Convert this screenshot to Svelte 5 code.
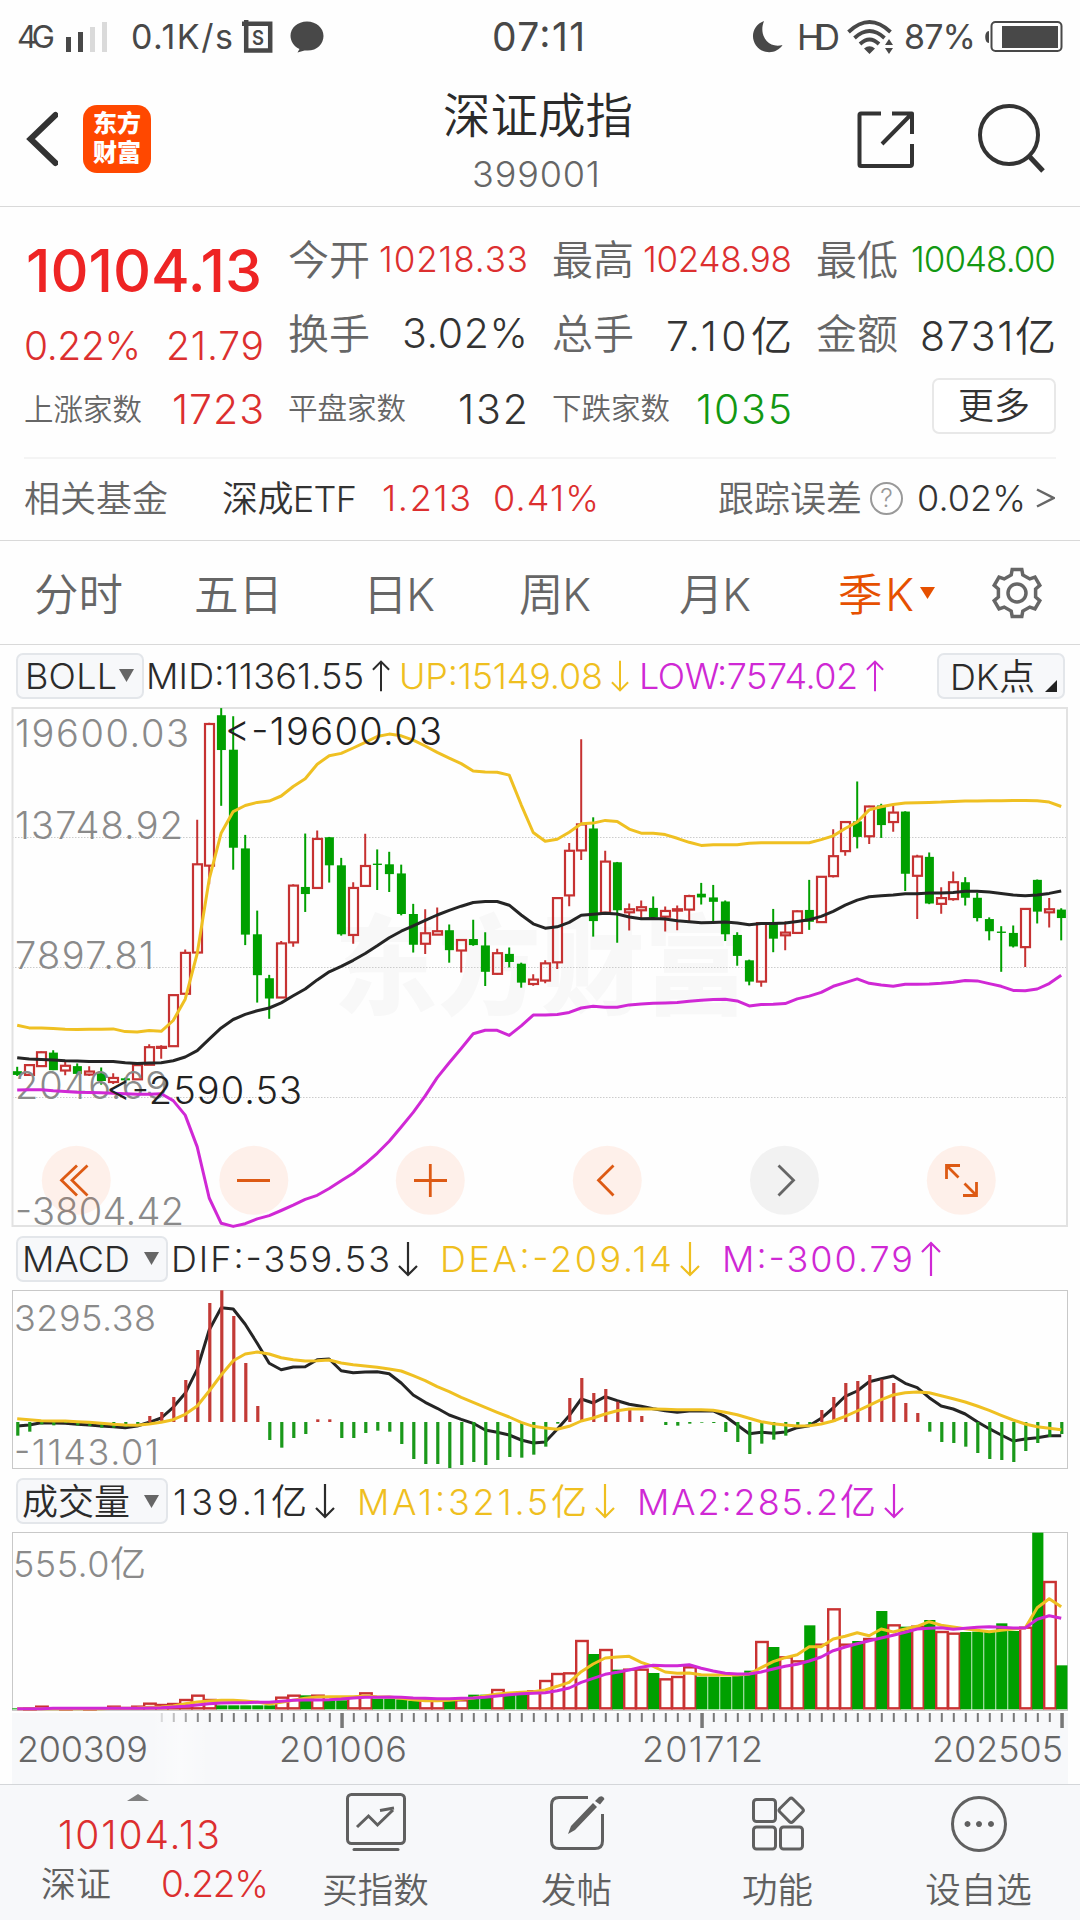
<script>
  // Every pane shares one time axis: 88 quarters, 12px apart.
  const STEP = 12;
  const xAt = (i) => 17.2 + i * STEP;

  // Each candle: direction, then high, body top, body bottom and low.
  const candles = `g 1085 1098 1109 1112;r 1078 1080 1109 1110;r 1040 1042 1083 1084;g 1036 1043 1095 1095;r 1070 1082 1096 1110;g 1075 1083 1106 1108;r 1083 1099 1108 1112;g 1087 1104 1127 1138;r 1104 1118 1130 1136;g 1117 1119 1125 1132;r 1078 1080 1122 1123;r 1018 1027 1079 1080;r 1021 1026 1029 1061;r 871 873 1024 1025;r 738 748 869 870;r 354 486 747 748;r 67 71 490 545;g 24 45 148 313;g 48 147 437 502;g 399 439 694 725;g 623 693 814 895;g 813 823 883 943;r 713 720 880 881;r 545 549 717 730;g 395 553 574 627;r 386 411 556 557;g 405 406 489 540;g 467 489 693 697;r 539 556 695 721;r 396 491 550 551;g 442 484 488 562;g 449 486 515 568;g 487 513 633 637;g 603 633 724 747;r 619 690 721 751;r 614 684 694 695;g 664 681 740 777;r 708 710 741 806;g 650 707 725 727;g 687 726 804 846;r 736 749 810 813;g 732 751 775 791;g 777 780 836 851;r 811 827 840 845;r 770 779 830 838;r 584 586 776 796;r 423 446 578 610;r 116 368 445 473;g 347 380 654 700;r 446 478 629 630;g 479 480 622 718;r 602 619 628 682;r 593 613 622 645;g 581 615 643 645;r 611 624 641 685;r 608 619 623 681;r 576 580 620 655;g 541 573 584 605;g 547 584 597 655;g 593 596 693 713;g 687 695 757 786;g 768 770 833 844;r 659 660 833 848;g 618 657 706 746;r 655 688 696 740;r 622 625 689 692;g 532 621 656 680;r 521 523 657 659;r 382 462 521 525;r 358 361 447 461;g 241 359 405 439;r 313 315 403 426;g 307 312 370 408;r 309 333 361 390;g 329 330 514 565;r 458 463 520 648;g 451 464 602 604;r 554 586 603 632;r 507 539 589 594;g 524 539 585 608;g 570 585 645 655;g 643 648 684 711;g 669 685 689 804;g 667 689 729 732;r 616 618 731 790;g 531 532 626 661;r 586 619 628 673;g 616 620 645 711`
    .split(';')
    .map((row, i) => {
      const [dir, ...v] = row.trim().split(' ');
      const [high, top, bottom, low] = v.map((n) => Number(n) / 2.958);
      return { up: dir === 'r', x: xAt(i), high, top, bottom, low };
    });

  const line = (values, scale, offset = 0) =>
    values.map((v, i) => `${xAt(i).toFixed(1)},${(v / scale - offset).toFixed(1)}`).join(' ');

  const upper = line([962,970,970,972,974,975,974,974,973,981,982,978,980,948,885,750,530,393,330,312,303,299,284,256,233,190,165,158,142,125,108,101,106,119,136,155,172,188,210,213,214,222,310,392,418,412,391,366,364,356,359,382,394,394,398,409,421,430,428,428,428,424,422,422,422,422,422,413,402,380,361,325,316,309,305,304,303,302,300,299,299,298,298,297,297,298,302,315], 2.958);
  const middle = line([1058,1062,1063,1065,1067,1068,1069,1069,1069,1073,1075,1074,1073,1067,1056,1037,1003,970,945,930,919,911,896,875,855,828,804,788,770,750,727,703,684,668,652,636,622,610,599,596,596,607,636,662,675,671,658,637,634,631,633,642,647,646,648,653,656,659,658,657,660,665,661,661,660,655,650,640,625,607,592,582,579,577,573,573,571,571,569,566,566,568,572,577,579,577,572,565], 2.958);
  const lower = line([1154,1153,1153,1156,1158,1160,1161,1162,1163,1165,1166,1166,1165,1185,1228,1322,1473,1548,1557,1549,1535,1525,1510,1494,1477,1465,1445,1422,1400,1372,1341,1305,1263,1220,1171,1117,1073,1031,987,977,977,992,964,932,932,930,924,911,906,909,909,902,899,897,896,895,891,888,886,885,890,905,901,900,898,884,876,865,847,836,825,838,843,847,841,841,840,838,835,830,831,839,847,859,860,855,839,814], 2.958);

  const MACD_TOP = 60;
  const ZERO = 591 / 3 - MACD_TOP;
  const macdBars = [632,620,598,601,594,601,603,608,608,606,598,573,561,516,465,375,234,196,273,414,543,645,668,639,627,583,583,639,639,624,617,620,657,702,717,717,729,720,711,720,705,696,698,689,665,596,519,459,504,492,530,554,573,591,600,602,596,593,594,621,651,687,656,644,632,602,598,555,516,474,468,450,463,474,534,564,620,651,654,665,684,702,705,711,678,654,636,627]
    .map((v, i) => {
      const end = v / 3 - MACD_TOP;
      return { x: xAt(i) + 0.7, up: end < ZERO, y: Math.min(end, ZERO), h: Math.abs(end - ZERO) };
    });
  const dif = line([603,600,593,594,595,598,600,603,605,608,603,592,579,547,505,433,315,248,252,298,355,415,434,426,425,404,402,437,443,441,440,446,474,510,532,550,570,583,595,615,622,630,645,654,651,613,572,522,534,515,527,538,544,551,557,562,558,558,558,574,600,626,622,625,621,608,602,580,549,514,498,470,461,453,475,488,518,543,552,567,590,611,630,648,642,638,632,632], 3, MACD_TOP);
  const dea = line([581,584,587,588,588,590,592,595,598,600,601,597,592,584,568,543,498,450,407,387,381,387,398,404,408,407,405,414,419,423,427,432,438,452,467,485,500,517,532,547,562,576,592,604,609,613,604,588,579,567,557,552,552,552,553,554,554,554,556,562,569,580,590,596,600,603,602,597,588,574,558,541,524,510,503,501,503,512,521,531,543,556,571,585,597,605,610,614], 3, MACD_TOP);

  const VOL_TOP = 10;
  const BASE = 568 / 3 - VOL_TOP;
  const volumes = [565,565,560,564,565,565,565,565,560,564,560,551,555,552,540,527,540,556,556,556,556,556,533,527,526,527,541,541,532,520,536,536,538,542,541,541,541,541,524,524,510,516,514,514,483,462,460,363,402,390,449,449,449,459,478,471,442,470,470,471,464,452,366,381,412,424,316,374,268,374,363,357,273,316,320,320,300,336,341,336,335,336,310,333,323,38,186,436]
    .map((v, i) => ({ x: xAt(i), up: candles[i].up, y: v / 3 - VOL_TOP }));
  const ma1 = line([566,566,566,566,566,566,566,566,565,565,564,562,561,558,551,546,543,541,541,543,546,552,547,541,535,531,530,530,530,528,530,531,535,539,542,542,541,538,534,528,522,519,517,515,510,499,487,455,432,414,411,409,427,439,456,460,459,464,465,465,465,462,443,425,413,404,380,380,357,349,338,347,327,336,327,319,305,316,321,326,331,335,331,327,324,263,236,260], 3, VOL_TOP);
  const ma2 = line([566,566,566,565,565,565,565,565,565,565,565,564,563,561,559,555,551,549,548,548,547,547,544,541,540,540,539,537,534,532,532,531,532,534,535,536,536,535,534,532,528,524,521,520,518,512,504,487,475,463,457,450,442,436,437,437,434,445,453,460,462,462,456,447,439,433,423,411,392,381,371,362,354,346,337,327,325,323,328,325,322,320,322,324,324,298,287,295], 3, VOL_TOP);

  const ticks = Array.from({ length: 76 }, (_, k) => k + 12).map((i) => ({
    x: xAt(i) + 0.6,
    major: i % 30 === 27,
    o: i < 16 ? 0.25 + (i - 12) * 0.2 : 1
  }));

  // Spreads a label's letters over the width its class gives it.
  function fit(node) {
    const range = document.createRange();
    range.selectNodeContents(node);
    const natural = range.getBoundingClientRect().width;
    const gaps = node.textContent.length - 1;
    node.style.letterSpacing = `${(node.clientWidth - natural) / gaps}px`;
  }

  const gear = (() => {
    const pts = [];
    for (let k = 0; k < 6; k++) {
      const a = (k * Math.PI) / 3 - Math.PI / 2;
      for (const [d, r] of [[-0.31, 19], [-0.2, 24], [0.2, 24], [0.31, 19]]) {
        pts.push(`${(28 + r * Math.cos(a + d)).toFixed(1)},${(28 + r * Math.sin(a + d)).toFixed(1)}`);
      }
    }
    return pts.join(' ');
  })();
</script>

{#snippet arrow(down)}
  <svg class="arrow" width="20" height="36" viewBox="0 0 20 36">
    <path d={down ? 'M10 1V34M1 25L10 34L19 25' : 'M10 35V2M1 11L10 2L19 11'} />
  </svg>
{/snippet}

{#snippet caret()}
  <svg class="caret" width="15" height="13" viewBox="0 0 15 13"><path d="M0 0H15L7.5 13Z" /></svg>
{/snippet}

<div class="screen">
  <div class="status">
    <span class="net" use:fit>4G</span>
    <svg class="bars" width="42" height="32" viewBox="0 0 42 32">
      <path class="ink" d="M0 16h5v15h-5zM12 11h5v20h-5z" />
      <path class="off" d="M24 6h5v25h-5zM36 1h5v30h-5z" />
    </svg>
    <span class="speed" use:fit>0.1K/s</span>
    <svg class="sbox" width="31" height="34" viewBox="0 0 31 34">
      <path d="M0 3.8H28.200V30.500H4.200V0" class="frame" />
      <text x="10" y="24.500" textLength="12" lengthAdjust="spacingAndGlyphs">S</text>
    </svg>
    <svg class="bubble" width="34" height="32" viewBox="0 0 34 32">
      <path class="ink" d="M17 0.500C7.500 .5 .5 7 .5 14.800C.5 20.500 4 25.500 9.500 28L7.500 31.500L14.500 29.400C26 31 33.500 23.500 33.500 15C33.500 7 26.500 .5 17 .5Z" />
    </svg>
    <span class="clock" use:fit>07:11</span>
    <svg class="moon" width="32" height="34" viewBox="0 0 32 34">
      <path class="ink" d="M12 1C1 5 -2 17 4 25.500C11 35 25 34 30.500 25C17 29 6 16 12 1Z" />
    </svg>
    <span class="hd" use:fit>HD</span>
    <svg class="wifi" width="46" height="34" viewBox="0 0 46 34">
      <path d="M1.500 12Q22.500 -8 43.500 12M7.500 18Q22.500 4 37.500 18M13 24Q22.500 15 32 24" />
      <path class="ink" d="M17 28.500Q22.500 24 28 28.500L22.500 34ZM38 25L42 19L46 25ZM38 28L42 34L46 28Z" />
    </svg>
    <span class="pct" use:fit>87%</span>
    <svg class="battery" width="78" height="31" viewBox="0 0 78 31">
      <path class="ink" d="M4 10C-1 10 -1 22 4 22ZM17 5H73V27H17Z" />
      <rect x="6.500" y="1" width="70" height="29" rx="4" />
    </svg>
  </div>

  <header>
    <svg class="back" width="34" height="56" viewBox="0 0 34 56"><path d="M31.500 4L6.500 28L31.500 52" /></svg>
    <div class="logo"><span>东方</span><span>财富</span></div>
    <div class="title">
      <h1>深证成指</h1>
      <span class="code" use:fit>399001</span>
    </div>
    <svg class="share" width="60" height="60" viewBox="0 0 60 60">
      <path d="M25 3.500H5Q3.500 3.500 3.500 5V54.500Q3.500 56 5 56H54Q56 56 56 54V34M36 3.500H56V24M56 3.500L26 34" />
    </svg>
    <svg class="search" width="70" height="72" viewBox="0 0 70 72">
      <circle cx="32" cy="31" r="29" /><path d="M52 52L66 67" />
    </svg>
  </header>

  <section class="quote">
    <div class="last">
      <strong class="price red" use:fit>10104.13</strong>
      <div class="change red"><span class="w114" use:fit>0.22%</span><span class="w98" use:fit>21.79</span></div>
      <div class="count"><small>上涨家数</small><b class="w91 red" use:fit>1723</b></div>
    </div>
    <div class="cell"><label>今开</label><b class="sm w148 red" use:fit>10218.33</b></div>
    <div class="cell"><label>最高</label><b class="sm w148 red" use:fit>10248.98</b></div>
    <div class="cell"><label>最低</label><b class="sm w144 green" use:fit>10048.00</b></div>
    <div class="cell"><label>换手</label><b class="w124" use:fit>3.02%</b></div>
    <div class="cell"><label>总手</label><b class="w124" use:fit>7.10亿</b></div>
    <div class="cell"><label>金额</label><b class="w136" use:fit>8731亿</b></div>
    <div class="cell low"><small>平盘家数</small><b class="w70" use:fit>132</b></div>
    <div class="cell low"><small>下跌家数</small><b class="w96 green" use:fit>1035</b></div>
    <div class="cell low end"><button class="more">更多</button></div>
  </section>

  <section class="fund">
    <span class="grey cjk">相关基金</span>
    <span class="etf cjk" use:fit>深成ETF</span>
    <span class="nav-v red" use:fit>1.213</span>
    <span class="nav-p red" use:fit>0.41%</span>
    <span class="grey track cjk">跟踪误差</span>
    <span class="help">?</span>
    <span class="err" use:fit>0.02%</span>
    <svg class="gt" width="19" height="20" viewBox="0 0 19 20"><path d="M1 1.500L17.500 10L1 18.500" /></svg>
  </section>

  <nav class="tabs">
    <span>分时</span><span>五日</span><span use:fit class="k">日K</span><span use:fit class="k">周K</span><span use:fit class="k">月K</span>
    <span use:fit class="k active">季K</span>
    <svg class="tri" width="15" height="12" viewBox="0 0 15 12"><path d="M0 0H15L7.500 12Z" /></svg>
    <svg class="gear" width="56" height="56" viewBox="0 0 56 56"><polygon points={gear} /><circle cx="28" cy="28" r="9" /></svg>
  </nav>

  <div class="info boll">
    <button class="pick"><span class="w90" use:fit>BOLL</span>{@render caret()}</button>
    <span class="v mid" use:fit>MID:11361.55</span>{@render arrow(false)}
    <span class="v up yellow" use:fit>UP:15149.08</span><i class="yellow">{@render arrow(true)}</i>
    <span class="v lo magenta" use:fit>LOW:7574.02</span><i class="magenta">{@render arrow(false)}</i>
    <button class="pick dk"><span class="w85" use:fit>DK点</span><svg width="12" height="12" viewBox="0 0 12 12"><path d="M12 0V12H0Z" /></svg></button>
  </div>

  <svg class="pane" width="1080" height="530" viewBox="0 0 1080 530">
    <text class="mark" x="334" y="306" textLength="414" lengthAdjust="spacingAndGlyphs">东方财富</text>
    <path class="grid" d="M12 137.500H1067M12 267.500H1067M12 397.500H1067" />
    <rect class="border" x="12.500" y="8" width="1054.500" height="518" />
    {#each candles as c}
      <g class={c.up ? 'rise' : 'fall'}>
        {#if c.up}
          <path d="M{c.x} {c.high}V{c.top}M{c.x} {c.bottom}V{c.low}" />
          <rect x={c.x - 4.2} y={c.top} width="9" height={c.bottom - c.top} />
        {:else}
          <path d="M{c.x} {c.high}V{c.low}" />
          <rect x={c.x - 4.3} y={c.top} width="9" height={c.bottom - c.top} />
        {/if}
      </g>
    {/each}
    <g class="scale">
      <text x="15" y="47.300" textLength="174">19600.03</text>
      <text x="15" y="139" textLength="168">13748.92</text>
      <text x="15" y="269" textLength="139">7897.81</text>
      <text x="15" y="398.500" textLength="153">2046.69</text>
      <text x="15" y="524.700" textLength="169">-3804.42</text>
    </g>
    <polyline class="yellow" points={upper} />
    <polyline class="ink" points={middle} />
    <polyline class="magenta" points={lower} />
    <g class="peak">
      <text x="225" y="45.300" textLength="217">&lt;-19600.03</text>
      <text x="106" y="404.300" textLength="196">&lt;-2590.53</text>
    </g>
    <g class="ctl">
      <circle cx="76.300" cy="480.300" r="34.500" /><circle cx="253.800" cy="480.300" r="34.500" />
      <circle cx="430.300" cy="480.300" r="34.500" /><circle cx="607.300" cy="480.300" r="34.500" />
      <circle class="off" cx="784.500" cy="480.300" r="34.500" /><circle cx="961.300" cy="480.300" r="34.500" />
      <path d="M77 465.500L61.500 480.300L77 495.500M87.500 465.500L72 480.300L87.500 495.500M237 480.500H270M414 480.500H447M430.300 464V497M613.500 465.500L598.500 480.300L613.500 495.500" />
      <path class="off" d="M778.500 465.500L793.500 480.300L778.500 495.500" />
      <path d="M946.500 479V465.500H960M946.500 465.500L958.500 477.500M976.500 482V495.500H963M976.500 495.500L964.500 483.500" />
    </g>
  </svg>

  <div class="info macd">
    <button class="pick"><span class="w106" use:fit>MACD</span>{@render caret()}</button>
    <span class="v a" use:fit>DIF:-359.53</span>{@render arrow(true)}
    <span class="v b yellow" use:fit>DEA:-209.14</span><i class="yellow">{@render arrow(true)}</i>
    <span class="v c magenta" use:fit>M:-300.79</span><i class="magenta">{@render arrow(false)}</i>
  </div>

  <svg class="pane" width="1080" height="187" viewBox="0 0 1080 187">
    <rect class="border thin" x="12.500" y="5.500" width="1055" height="178" />
    <g class="scale small">
      <text x="14" y="45.700" textLength="142">3295.38</text>
      <text x="14" y="180" textLength="145">-1143.01</text>
    </g>
    <polyline class="ink" points={dif} />
    {#each macdBars as b}
      <rect class={b.up ? 'hist up' : 'hist'} x={b.x - 1.7} y={b.y} width="3.200" height={b.h} />
    {/each}
    <polyline class="yellow" points={dea} />
  </svg>

  <div class="info vol">
    <button class="pick"><span class="w106 cjk" use:fit>成交量</span>{@render caret()}</button>
    <span class="v a cjk" use:fit>139.1亿</span>{@render arrow(true)}
    <span class="v b cjk yellow" use:fit>MA1:321.5亿</span><i class="yellow">{@render arrow(true)}</i>
    <span class="v c cjk magenta" use:fit>MA2:285.2亿</span><i class="magenta">{@render arrow(true)}</i>
  </div>

  <svg class="pane" width="1080" height="254" viewBox="0 0 1080 254">
    <defs>
      <linearGradient id="fade">
        <stop offset="0" stop-color="#fff" stop-opacity="0" />
        <stop offset=".5" stop-color="#fff" stop-opacity=".4" />
        <stop offset="1" stop-color="#fff" stop-opacity="0" />
      </linearGradient>
    </defs>
    <rect class="border thin" x="12.500" y="2.500" width="1055" height="178" />
    <g class="scale small"><text x="13" y="46.700" textLength="133">555.0亿</text></g>
    {#each volumes as b}
      {#if b.up}
        <rect class="vup" x={b.x - 5} y={b.y} width="11.500" height={Math.max(BASE - 1 - b.y, 1)} />
      {:else}
        <rect class="vdown" x={b.x - 5} y={b.y} width="11.200" height={Math.max(BASE - b.y, 1)} />
      {/if}
    {/each}
    <polyline class="yellow" points={ma1} />
    <polyline class="magenta" points={ma2} />
    <rect class="axis" x="12" y="183" width="1056" height="71" />
    <rect fill="url(#fade)" x="150" y="183" width="60" height="71" />
    {#each ticks as t}
      <rect class="tick" opacity={t.o} x={t.x - (t.major ? 1.5 : 1)} y="183" width={t.major ? 3.5 : 2} height={t.major ? 15 : 9} />
    {/each}
    <g class="dates">
      <text x="17" y="232.300" textLength="131">200309</text>
      <text x="279" y="232.300" textLength="128">201006</text>
      <text x="642" y="232.300" textLength="121">201712</text>
      <text x="932" y="232.300" textLength="131">202505</text>
    </g>
  </svg>

  <footer>
    <div class="idx">
      <svg width="22" height="7" viewBox="0 0 22 7"><path d="M11 0L22 7H0Z" /></svg>
      <span class="ip red" use:fit>10104.13</span>
      <div class="il"><span>深证</span><span class="ic red" use:fit>0.22%</span></div>
    </div>
    <div class="item">
      <svg width="60" height="60" viewBox="0 0 60 60">
        <rect x="1.500" y="2.500" width="57" height="49" rx="4" />
        <path d="M8 57.500H52" class="cap" /><path d="M11 35L22.500 24L31.500 33L47 18M34 18.500L48 16" />
      </svg>
      <span>买指数</span>
    </div>
    <div class="item">
      <svg width="60" height="60" viewBox="0 0 60 60">
        <path d="M41 5.500H12Q4.500 5.500 4.500 13V49Q4.500 56.500 12 56.500H48Q55.500 56.500 55.500 49V22" />
        <path class="solid" d="M21 42L24 34L46 11L50 15L28 38ZM48 9L52 5Q56 3 57.500 7L53 12.500Z" />
      </svg>
      <span>发帖</span>
    </div>
    <div class="item">
      <svg width="60" height="60" viewBox="0 0 60 60">
        <rect x="5.500" y="7.500" width="22" height="22" rx="3" /><rect x="5.500" y="35" width="22" height="22" rx="3" />
        <rect x="32.500" y="35" width="22" height="22" rx="3" /><rect x="34" y="9" width="18.500" height="18.500" rx="2.500" transform="rotate(45 43.200 18.200)" />
      </svg>
      <span>功能</span>
    </div>
    <div class="item">
      <svg width="60" height="60" viewBox="0 0 60 60">
        <circle cx="30" cy="32" r="26.500" /><path class="solid" d="M18.500 29a3 3 0 1 0 .01 0ZM30 29a3 3 0 1 0 .01 0ZM42 29a3 3 0 1 0 .01 0Z" />
      </svg>
      <span>设自选</span>
    </div>
  </footer>
</div>

<style>
  :global(body) { background: #fff; }
  .screen {
    width: 1080px; height: 1920px; overflow: hidden; display: flex; flex-direction: column;
    background: #fefefe; color: #2b2b2b; font-family: Inter, "Noto Sans CJK SC", sans-serif; font-weight: 350;
    font-optical-sizing: none; font-feature-settings: "case";
  }
  .screen > * { flex: none; box-sizing: border-box; }
  span, b, strong, label, small, h1 { white-space: nowrap; font-weight: inherit; margin: 0; display: block; }
  svg { display: block; flex: none; }
  i { display: block; }
  button { font: inherit; color: inherit; margin: 0; padding: 0; box-sizing: border-box; }
  .red { color: #dc2f2f; }
  .green { color: #129812; }
  .yellow { color: #efbf1f; }
  .magenta { color: #cf28d4; }

  .status { height: 73px; display: flex; align-items: center; color: #484848; font-size: 34px; font-weight: 400; padding-left: 17px; }
  .status .ink { fill: #484848; }
  .net { width: 38px; font-size: 31px; }
  .bars { margin-left: 11px; }
  .bars .off { fill: #dadada; }
  .speed { width: 102px; margin-left: 23px; }
  .sbox { margin-left: 9px; }
  .frame { fill: none; stroke: #484848; stroke-width: 4.500; }
  .sbox text { font-size: 20px; font-weight: 600; fill: #484848; }
  .bubble { margin-left: 17px; }
  .clock { width: 93px; font-size: 39px; margin-left: 168px; }
  .moon { margin-left: 167px; }
  .hd { width: 43px; margin-left: 13px; font-size: 35px; }
  .wifi { margin-left: 7px; }
  .wifi path:first-child { fill: none; stroke: #484848; stroke-width: 3.800; }
  .pct { width: 72px; margin-left: 11px; }
  .battery { margin-left: 9px; }
  .battery rect { fill: none; stroke: #484848; stroke-width: 2; }

  header { height: 134px; border-bottom: 1px solid #d9d9d9; display: flex; align-items: flex-start; padding: 0 0 0 24px; }
  header svg { fill: none; stroke: #333; stroke-width: 4; }
  .back { margin-top: 38px; }
  .back path { stroke-width: 6; stroke-linecap: round; }
  .logo { width: 68px; height: 68px; margin: 32px 0 0 25px; border-radius: 14px; background: #ff4800; color: #fff; font-size: 24px; font-weight: 800; line-height: 29px; text-align: center; padding-top: 4px; box-sizing: border-box; }
  .title { width: 240px; margin: 14px 0 0 267px; display: flex; flex-direction: column; align-items: center; }
  h1 { font-size: 47.500px; line-height: 58px; }
  .code { width: 128px; font-size: 36px; line-height: 44px; margin: 7px 4px 0 0; color: #666; }
  .share { margin: 37px 0 0 198px; stroke-linejoin: round; }
  .search { margin: 31px 0 0 61px; }
  .search path { stroke-width: 5; }

  .quote {
    height: 250px; margin-right: -24px; padding: 21px 24px 0; display: grid; grid-template-columns: 240px 240px 240px 240px; column-gap: 24px;
    grid-template-rows: 74px 76px 74px; color: #333;
  }
  .last { grid-row: 1 / 4; display: flex; flex-direction: column; }
  .price { width: 236px; font-size: 59px; font-weight: 500; line-height: 72px; margin: 7px 0 0 2px; color: #ee2424; }
  .change { display: flex; justify-content: space-between; width: 240px; font-size: 39px; line-height: 48px; margin-top: 15px; }
  .count { display: flex; justify-content: space-between; align-items: center; width: 240px; margin-top: 14px; height: 50px; font-size: 41px; }
  small { font-size: 29.500px; color: #666; }
  .count small { padding-bottom: 5px; }
  .cell { display: flex; justify-content: space-between; align-items: center; font-size: 41px; height: 62px; }
  .cell label { color: #666; padding-bottom: 5px; }
  .cell .sm { font-size: 35px; }
  .cell.end { justify-content: flex-end; }
  .cell.low { height: 56px; }
  .cell.low b { padding-top: 5px; }
  .w70 { width: 70px; } .w85 { width: 85px; } .w90 { width: 92px; } .w91 { width: 92px; } .w96 { width: 96px; } .w98 { width: 98px; }
  .w106 { width: 108px; } .w114 { width: 117px; } .w124 { width: 126px; } .w136 { width: 136px; } .w144 { width: 145px; } .w148 { width: 149px; }
  .more { width: 124px; height: 56px; border: 2px solid #e8e8e8; border-radius: 7px; background: #fff; font-size: 36px; line-height: 50px; }

  .fund { height: 84px; margin: 0; display: flex; align-items: center; padding: 0 24px; font-size: 36px; color: #333; border-bottom: 1px solid #d9d9d9; background: linear-gradient(#f4f4f4, #f4f4f4) 24px 0 / 1032px 2px no-repeat; }
  .fund > * { margin-bottom: 1px; }
  .fund .cjk { padding-bottom: 4px; }
  .grey { color: #666; }
  .etf { width: 135px; margin-left: 54px; }
  .nav-v { width: 89px; margin-left: 25px; }
  .nav-p { width: 106px; margin-left: 22px; }
  .track { margin-left: 119px; }
  .help { width: 33px; height: 33px; border: 2.500px solid #999; border-radius: 50%; box-sizing: border-box; font-size: 25px; line-height: 29px; text-align: center; color: #999; margin-left: 8px; }
  .err { width: 109px; margin-left: 14px; }
  .gt { margin-left: 10px; fill: none; stroke: #666; stroke-width: 2.500; }

  .tabs { height: 104px; border-bottom: 1px solid #d9d9d9; display: flex; align-items: center; padding-left: 34px; font-size: 44.500px; color: #666; }
  .tabs span { padding-bottom: 2px; }
  .tabs span + span { margin-left: 71px; }
  .tabs .k { width: 72px; }
  .tabs span:nth-child(3) { margin-left: 80px; }
  .tabs span:nth-child(4) { margin-left: 84px; }
  .tabs span:nth-child(5) { margin-left: 88px; }
  .tabs .active { color: #e65000; width: 76px; margin-left: 87px !important; }
  .tri { fill: #e65000; margin-left: 6px; }
  .gear { margin-left: 54px; fill: none; stroke: #666; stroke-width: 3.500; }

  .info { display: flex; align-items: center; font-size: 36px; padding-left: 16px; }
  .boll { height: 56px; padding-top: 7px; margin-top: -1px; }
  .macd { height: 55px; padding-top: 2px; }
  .vol { height: 58px; }
  .vol .cjk { padding-bottom: 4px; }
  .pick { height: 46px; border: 2px solid #e3e6ea; border-radius: 7px; background: #f7f8fa; display: flex; align-items: center; }
  .boll .pick { width: 128px; padding-left: 7px; }
  .macd .pick, .vol .pick { width: 152px; padding-left: 4px; }
  .caret { fill: #666; margin-left: 2px; }
  .macd .caret, .vol .caret { margin-left: 14px; }
  .arrow { fill: none; stroke: currentColor; stroke-width: 2.200; }
  .boll .arrow { width: 18px; margin-left: 8px; }
  .macd .arrow, .vol .arrow { margin-left: 8px; }
  .boll .mid { width: 218px; margin-left: 2px; }
  .boll .up { width: 204px; margin-left: 9px; }
  .boll .lo { width: 219px; margin-left: 10px; }
  .info .pick.dk { width: 128px; margin-left: 53px; padding-left: 11px; }
  .dk span { padding-bottom: 3px; }
  .dk svg { margin: 20px 0 0 10px; fill: #222; }
  .macd .a { width: 219px; margin-left: 3px; }
  .macd .b { width: 232px; margin-left: 22px; }
  .macd .c { width: 191px; margin-left: 22px; }
  .vol .a { width: 134px; margin-left: 5px; }
  .vol .b { width: 230px; margin-left: 22px; }
  .vol .c { width: 239px; margin-left: 22px; }

  .pane polyline { fill: none; stroke-width: 3; stroke-linejoin: round; }
  polyline.yellow { stroke: #efc022; }
  polyline.magenta { stroke: #d028d5; }
  polyline.ink { stroke: #252525; }
  .border { fill: none; stroke: #e2e2e2; stroke-width: 2; }
  .border.thin { stroke: #c8c8c8; stroke-width: 1; }
  .grid { fill: none; stroke: #ccc; stroke-width: 1; stroke-dasharray: 1.500 1.500; }
  .mark { font-size: 108px; font-weight: 900; fill: #f8f8f8; }
  .rise { fill: none; stroke: #c63232; stroke-width: 2; }
  .rise rect { stroke-width: 2.200; }
  .fall path { stroke: #00a000; stroke-width: 2; }
  .fall rect { fill: #00a000; }
  .scale { font-size: 38px; fill: #8a8a8a; }
  .scale.small { font-size: 36px; }
  .peak { font-size: 38px; fill: #222; }
  .ctl circle { fill: rgba(255, 100, 30, .09); }
  .ctl circle.off { fill: #f2f2f2; }
  .ctl path { fill: none; stroke: #dd5a14; stroke-width: 2.800; }
  .ctl path.off { stroke: #666; }
  .hist { fill: #1a981a; }
  .hist.up { fill: #c23a36; }
  .vup { fill: #fff; stroke: #c93232; stroke-width: 2.400; }
  .vdown { fill: #00a000; }
  .axis { fill: #f7f8fa; }
  .tick { fill: #777; }
  .dates { font-size: 36px; fill: #666; }

  footer { height: 136px; border-top: 1px solid #d4d6d9; background: #f7f8fa; display: flex; color: #606060; }
  .idx { width: 275px; display: flex; flex-direction: column; box-sizing: border-box; }
  .idx svg { margin: 9px 0 0 127px; fill: #808080; }
  .ip { width: 162px; font-size: 39px; line-height: 48px; margin: 10px 0 0 58px; }
  .il { display: flex; align-items: center; height: 48px; font-size: 35px; padding-left: 41px; }
  .ic { width: 108px; font-size: 37px; margin-left: 50px; }
  .il span:first-child { padding-bottom: 3px; }
  .item { width: 201px; display: flex; flex-direction: column; align-items: center; font-size: 35.500px; }
  .item svg { margin-top: 7px; fill: none; stroke: #606060; stroke-width: 3; }
  .item .cap { stroke-linecap: round; }
  .item .solid { fill: #606060; stroke: none; }
  .item span { line-height: 50px; margin-top: 14px; }
</style>
